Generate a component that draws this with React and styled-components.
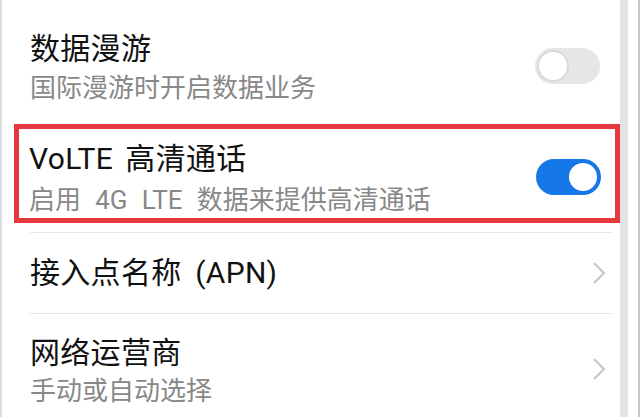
import React from "react";
import styled, { createGlobalStyle } from "styled-components";

const GlobalStyle = createGlobalStyle`
	html, body {
		margin: 0;
		padding: 0;
		background: #fff;
	}
	body {
		font-family: Roboto, "Noto Sans CJK SC", sans-serif;
	}
`;

const Page = styled.div`
	width: 640px;
	height: 417px;
	overflow: hidden;
	display: flex;
	background: #fff;
`;

const Panel = styled.div`
	width: 618px;
	border-left: 2px solid #dcdcdc;
	background: #fff;
	display: flex;
	flex-direction: column;
`;

const ScrollTrack = styled.div`
	width: 8px;
	background: #e3e3e3;
`;

const Edge = styled.div`
	width: 10px;
	border-right: 2px solid #c6c6c6;
`;

const Row = styled.div`
	display: flex;
	align-items: flex-start;
	justify-content: space-between;
	height: ${(p) => p.$h}px;
	padding: ${(p) => p.$pad || "0"};
	margin: 0 8px 0 28px;
	border-bottom: ${(p) => (p.$line ? `1px solid ${p.$line}` : "none")};
	box-sizing: border-box;
	flex-shrink: 0;
`;

const Highlight = styled.div`
	margin-left: 12px;
	width: 606px;
	height: 99px;
	border: 5px solid #e5383e;
	box-sizing: border-box;
	display: flex;
	align-items: flex-start;
	justify-content: space-between;
	padding: 12px 14px 0 10px;
	flex-shrink: 0;
`;

const Divider = styled.div`
	margin: 9px 8px 0 28px;
	border-top: 1px solid #eee6dc;
	flex-shrink: 0;
`;

const Texts = styled.div`
	display: flex;
	flex-direction: column;
`;

const Title = styled.div`
	font-size: 30px;
	line-height: 36px;
	color: #111;
	white-space: pre;
	letter-spacing: 0.3px;
	word-spacing: ${(p) => p.$ws || 0}em;
`;

const Sub = styled.div`
	font-size: 26px;
	line-height: 36px;
	margin-top: ${(p) => p.$gap || 3}px;
	color: #888;
	white-space: pre;
	word-spacing: ${(p) => p.$ws || 0}em;
`;

const Toggle = styled.div`
	width: 65px;
	height: 36px;
	margin-top: ${(p) => p.$top || 0}px;
	border-radius: 18px;
	background: ${(p) => (p.$on ? "#1677e8" : "#e6e6e6")};
	display: flex;
	align-items: center;
	justify-content: ${(p) => (p.$on ? "flex-end" : "flex-start")};
	padding: 2px;
	box-sizing: border-box;
`;

const Knob = styled.div`
	width: 32px;
	height: 32px;
	border-radius: 50%;
	background: #fff;
	box-sizing: border-box;
	border: 2px solid ${(p) => (p.$on ? "#1677e8" : "#d9d9d9")};
`;

const ChevronBox = styled.div`
	margin: ${(p) => p.$top}px 6px 0 0;
	display: flex;
`;

const Chevron = ({ top }) => (
	<ChevronBox $top={top}>
		<svg width="14" height="24" viewBox="0 0 14 24">
			<path d="M2 2 L12 12 L2 22" fill="none" stroke="#c4c4c4" strokeWidth="2" />
		</svg>
	</ChevronBox>
);

export default function App() {
	return (
		<Page>
			<GlobalStyle />
			<Panel>
				<Row $h={124} $pad="31px 12px 0 0">
					<Texts>
						<Title>数据漫游</Title>
						<Sub>国际漫游时开启数据业务</Sub>
					</Texts>
					<Toggle $top={17}>
						<Knob />
					</Toggle>
				</Row>
				<Highlight>
					<Texts>
						<Title $ws={0.15}>VoLTE 高清通话</Title>
						<Sub $gap={5} $ws={0.3}>启用 4G LTE 数据来提供高清通话</Sub>
					</Texts>
					<Toggle $on $top={18}>
						<Knob $on />
					</Toggle>
				</Highlight>
				<Divider />
				<Row $h={81} $pad="22px 0 0 0" $line="#e6e6e6">
					<Title $ws={0.2}>接入点名称 (APN)</Title>
					<Chevron top={6} />
				</Row>
				<Row $h={104} $pad="21px 0 0 0">
					<Texts>
						<Title>网络运营商</Title>
						<Sub $gap={2}>手动或自动选择</Sub>
					</Texts>
					<Chevron top={22} />
				</Row>
			</Panel>
			<ScrollTrack />
			<Edge />
		</Page>
	);
}
